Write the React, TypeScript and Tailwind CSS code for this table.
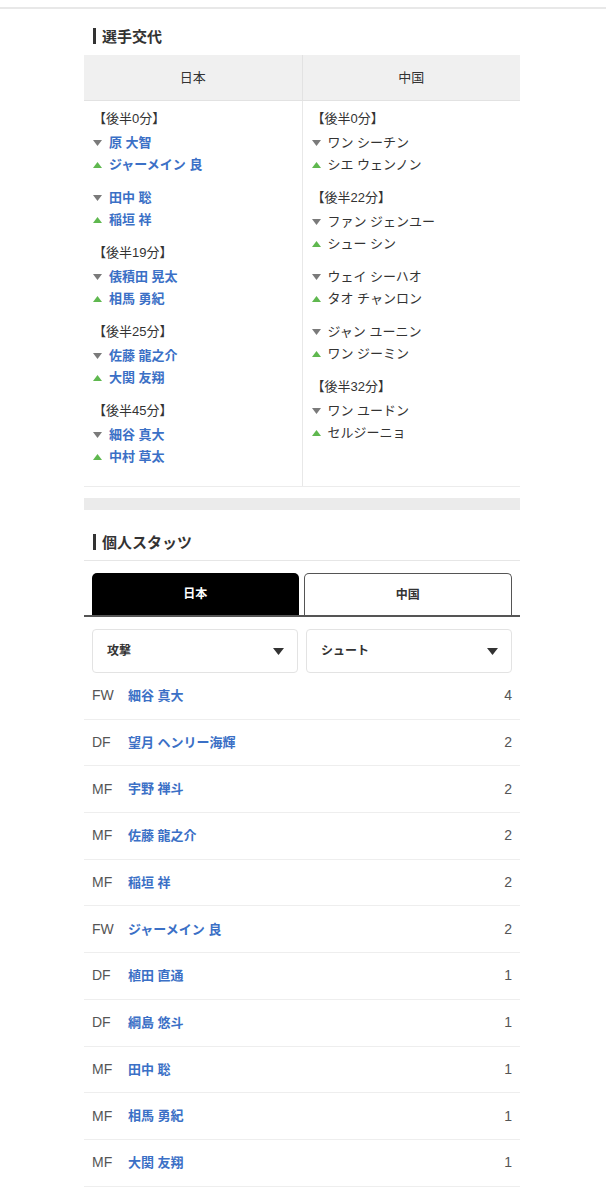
import React from "react";

type Group = { time: string; pairs: [string, string][] };

const japanSubs: Group[] = [
  { time: "後半0分", pairs: [["原 大智", "ジャーメイン 良"], ["田中 聡", "稲垣 祥"]] },
  { time: "後半19分", pairs: [["俵積田 晃太", "相馬 勇紀"]] },
  { time: "後半25分", pairs: [["佐藤 龍之介", "大関 友翔"]] },
  { time: "後半45分", pairs: [["細谷 真大", "中村 草太"]] },
];

const chinaSubs: Group[] = [
  { time: "後半0分", pairs: [["ワン シーチン", "シエ ウェンノン"]] },
  {
    time: "後半22分",
    pairs: [
      ["ファン ジェンユー", "シュー シン"],
      ["ウェイ シーハオ", "タオ チャンロン"],
      ["ジャン ユーニン", "ワン ジーミン"],
    ],
  },
  { time: "後半32分", pairs: [["ワン ユードン", "セルジーニョ"]] },
];

const stats = [
  ["FW", "細谷 真大", 4],
  ["DF", "望月 ヘンリー海輝", 2],
  ["MF", "宇野 禅斗", 2],
  ["MF", "佐藤 龍之介", 2],
  ["MF", "稲垣 祥", 2],
  ["FW", "ジャーメイン 良", 2],
  ["DF", "植田 直通", 1],
  ["DF", "綱島 悠斗", 1],
  ["MF", "田中 聡", 1],
  ["MF", "相馬 勇紀", 1],
  ["MF", "大関 友翔", 1],
] as const;

const Tri: React.FC<{ up?: boolean; className?: string }> = ({ up, className }) => (
  <svg width="9" height="6" viewBox="0 0 9 6" className={className}>
    {up ? <path d="M4.5 0L9 6H0z" fill="currentColor" /> : <path d="M0 0H9L4.5 6z" fill="currentColor" />}
  </svg>
);

const SectionTitle: React.FC<{ children: React.ReactNode }> = ({ children }) => (
  <div className="flex items-center h-[20px] pl-[9px]">
    <span className="w-[3px] h-[16px] bg-[#333]" />
    <span className="ml-[6px] text-[15px] font-bold text-[#333] leading-none">{children}</span>
  </div>
);

const SubColumn: React.FC<{ groups: Group[]; linked?: boolean; border?: boolean }> = ({ groups, linked, border }) => (
  <div className={"flex-1 pt-[7px] pb-[7px] pl-[9px] " + (border ? "border-r border-[#e8e8e8]" : "")}>
    {groups.map((g) => (
      <div key={g.time}>
        <div className="h-[22px] leading-[22px] mb-[2px] text-[13px] text-[#333]">【{g.time}】</div>
        {g.pairs.map(([out, inn]) => (
          <div key={out} className="mb-[11px]">
            <div className="flex items-center h-[22px]">
              <Tri className="text-[#7a7a7a]" />
              <span className={"ml-[7px] text-[13px] " + (linked ? "font-bold text-[#3b70c6]" : "text-[#333]")}>{out}</span>
            </div>
            <div className="flex items-center h-[22px]">
              <Tri up className="text-[#5fb84f]" />
              <span className={"ml-[7px] text-[13px] " + (linked ? "font-bold text-[#3b70c6]" : "text-[#333]")}>{inn}</span>
            </div>
          </div>
        ))}
      </div>
    ))}
  </div>
);

const Select: React.FC<{ label: string }> = ({ label }) => (
  <div className="flex-1 h-[44px] border border-[#e3e3e3] rounded-[4px] flex items-center justify-between pl-[14px] pr-[13px]">
    <span className="text-[12px] font-bold text-[#333]">{label}</span>
    <svg width="11" height="7" viewBox="0 0 11 7">
      <path d="M0 0H11L5.5 7z" fill="#333" />
    </svg>
  </div>
);

export default function App() {
  return (
    <div className="w-[606px] min-h-[1200px] bg-white font-['Liberation_Sans','Noto_Sans_CJK_JP',sans-serif]">
      <div className="h-[7px]" />
      <div className="border-t-2 border-[#e8e8e8]" />
      <div className="ml-[84px] w-[436px] pt-[17px]">
        <SectionTitle>選手交代</SectionTitle>

        <div className="mt-[9px]">
          <div className="flex h-[46px] bg-[#f0f0f0] border-b border-[#e2e2e2] text-[13px] text-[#333]">
            <div className="flex-1 flex items-center justify-center border-r border-[#e2e2e2]">日本</div>
            <div className="flex-1 flex items-center justify-center">中国</div>
          </div>
          <div className="flex border-b border-[#ececec]">
            <SubColumn groups={japanSubs} linked border />
            <SubColumn groups={chinaSubs} />
          </div>
        </div>

        <div className="mt-[11px] h-[12px] bg-[#ebebeb]" />

        <div className="mt-[22px]">
          <SectionTitle>個人スタッツ</SectionTitle>
        </div>
        <div className="mt-[8px] border-b border-[#e6e6e6]" />

        <div className="mt-[12px] flex gap-[5px] px-[8px] border-b-2 border-[#555]">
          <div className="flex-1 h-[42px] bg-black rounded-t-[5px] flex items-center justify-center text-[12px] font-bold text-white">
            日本
          </div>
          <div className="flex-1 h-[42px] bg-white border border-b-0 border-[#555] rounded-t-[5px] flex items-center justify-center text-[12px] font-bold text-[#333]">
            中国
          </div>
        </div>

        <div className="mt-[12px] flex gap-[8px] px-[8px]">
          <Select label="攻撃" />
          <Select label="シュート" />
        </div>

        <div>
          {stats.map(([pos, name, val]) => (
            <div key={name} className="h-[46.7px] flex items-center px-[8px] border-b border-[#eeeeee]">
              <span className="w-[36px] text-[14px] text-[#555]">{pos}</span>
              <span className="flex-1 text-[13px] font-bold text-[#3b70c6]">{name}</span>
              <span className="text-[14px] text-[#555]">{val}</span>
            </div>
          ))}
        </div>
      </div>
    </div>
  );
}
